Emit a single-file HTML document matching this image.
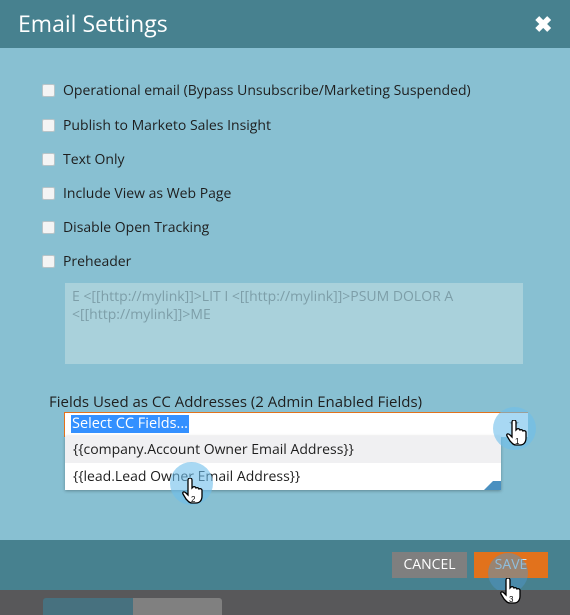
<!DOCTYPE html>
<html><head><style>
*{margin:0;padding:0;box-sizing:border-box}
body{width:570px;height:615px;overflow:hidden;position:relative;font-family:"Open Sans","Liberation Sans",sans-serif;background:#88c0d2}
.hdr{position:absolute;left:0;top:0;width:570px;height:48px;background:#47818f;color:#fff}
.hdr h1{position:absolute;left:18px;top:7px;font-size:23px;font-weight:normal}
.x{position:absolute;left:534px;top:9px;font-size:22px;font-weight:bold}
.cb{position:absolute;left:42px;width:13px;height:13px;background:#f4f4f4;border:1px solid #b8c4c8;border-radius:2px}
.lb{position:absolute;left:63px;font-size:14px;color:#1e1e1e}
.ta{position:absolute;left:65px;top:283px;width:458px;height:81px;background:#a9d1db;color:#7d9ea8;font-size:14px;line-height:18px;padding:5px 7px}
.flab{position:absolute;left:49px;top:392px;font-size:15px;color:#1e1e1e}
.sel{position:absolute;left:64px;top:412px;width:464px;height:25px;background:#fff;border-left:1px solid #e2721c;border-top:1px solid #e2721c}
.sel span{position:absolute;left:6px;top:2px;background:#3390ff;color:#fff;font-size:14.5px;line-height:18px;padding:0 1px}
.dd{position:absolute;left:65px;top:436px;width:436px;height:54px;background:#fff;box-shadow:0 1px 3px rgba(0,0,0,.3);font-size:14px;color:#1e1e1e}
.dd div{height:27px;line-height:27px;padding-left:8px}
.ftr{position:absolute;left:0;top:540px;width:570px;height:50px;background:#47818f}
.btn{position:absolute;top:552px;height:26px;color:#fff;font-size:14px;text-align:center;line-height:26px}
.bot{position:absolute;left:0;top:590px;width:570px;height:25px;background:#58585a}
.circ{position:absolute;border-radius:50%;background:rgba(110,190,235,.6)}
.hand{position:absolute;width:22px;height:26px}
</style></head><body>
<div class="hdr"><h1>Email Settings</h1><div class="x">✖</div></div>
<div class="cb" style="top:84px"></div><div class="lb" style="top:81px">Operational email (Bypass Unsubscribe/Marketing Suspended)</div>
<div class="cb" style="top:119px"></div><div class="lb" style="top:116px">Publish to Marketo Sales Insight</div>
<div class="cb" style="top:153px"></div><div class="lb" style="top:150px">Text Only</div>
<div class="cb" style="top:187px"></div><div class="lb" style="top:184px">Include View as Web Page</div>
<div class="cb" style="top:221px"></div><div class="lb" style="top:218px">Disable Open Tracking</div>
<div class="cb" style="top:255px"></div><div class="lb" style="top:252px">Preheader</div>
<div class="ta">E &lt;[[http://mylink]]&gt;LIT I &lt;[[http://mylink]]&gt;PSUM DOLOR A &lt;[[http://mylink]]&gt;ME</div>
<div class="flab">Fields Used as CC Addresses (2 Admin Enabled Fields)</div>
<div class="sel"><span>Select CC Fields...</span><div style="position:absolute;left:444px;top:9px;border-left:5px solid transparent;border-right:5px solid transparent;border-top:5px solid #888"></div></div>
<div class="dd"><div style="background:#f0f0f2">{{company.Account Owner Email Address}}</div><div>{{lead.Lead Owner Email Address}}</div>
<div style="position:absolute;right:0;bottom:0;border-left:9px solid transparent;border-bottom:9px solid #4a90c0"></div></div>
<div class="circ" style="left:493px;top:407px;width:43px;height:43px"></div>
<div class="circ" style="left:170px;top:462px;width:43px;height:43px"></div>
<div class="ftr"></div>
<div class="btn" style="left:392px;width:75px;background:#7f7f7f">CANCEL</div>
<div class="btn" style="left:474px;width:74px;background:#e2721c;color:#cfe6f0">SAVE</div>
<div class="circ" style="left:488px;top:553px;width:40px;height:40px;background:rgba(80,150,200,.5)"></div>
<svg class="hand" style="left:506px;top:420px" viewBox="0 0 22 26"><path d="M6 2a2 2 0 0 1 4 0v8l1-1a2 2 0 0 1 3 1 2 2 0 0 1 3 1 2 2 0 0 1 3 1v6c0 4-2 7-6 7H10c-3 0-4-2-6-4l-3-5c-1-2 1-3 3-1l2 2z" fill="#fff" stroke="#000" stroke-width="1.3"/><text x="9" y="24" font-size="8" font-family="Liberation Sans" fill="#000">1</text></svg>
<svg class="hand" style="left:182px;top:478px" viewBox="0 0 22 26"><path d="M6 2a2 2 0 0 1 4 0v8l1-1a2 2 0 0 1 3 1 2 2 0 0 1 3 1 2 2 0 0 1 3 1v6c0 4-2 7-6 7H10c-3 0-4-2-6-4l-3-5c-1-2 1-3 3-1l2 2z" fill="#fff" stroke="#000" stroke-width="1.3"/><text x="9" y="24" font-size="8" font-family="Liberation Sans" fill="#000">2</text></svg>
<div class="bot"><div style="position:absolute;left:43px;top:8px;width:90px;height:17px;background:#47717f;border-radius:3px 0 0 0"></div><div style="position:absolute;left:133px;top:8px;width:89px;height:17px;background:#808080;border-radius:0 3px 0 0"></div></div>
<svg class="hand" style="left:500px;top:578px" viewBox="0 0 22 26"><path d="M6 2a2 2 0 0 1 4 0v8l1-1a2 2 0 0 1 3 1 2 2 0 0 1 3 1 2 2 0 0 1 3 1v6c0 4-2 7-6 7H10c-3 0-4-2-6-4l-3-5c-1-2 1-3 3-1l2 2z" fill="#fff" stroke="#000" stroke-width="1.3"/><text x="9" y="24" font-size="8" font-family="Liberation Sans" fill="#000">3</text></svg>
</body></html>
